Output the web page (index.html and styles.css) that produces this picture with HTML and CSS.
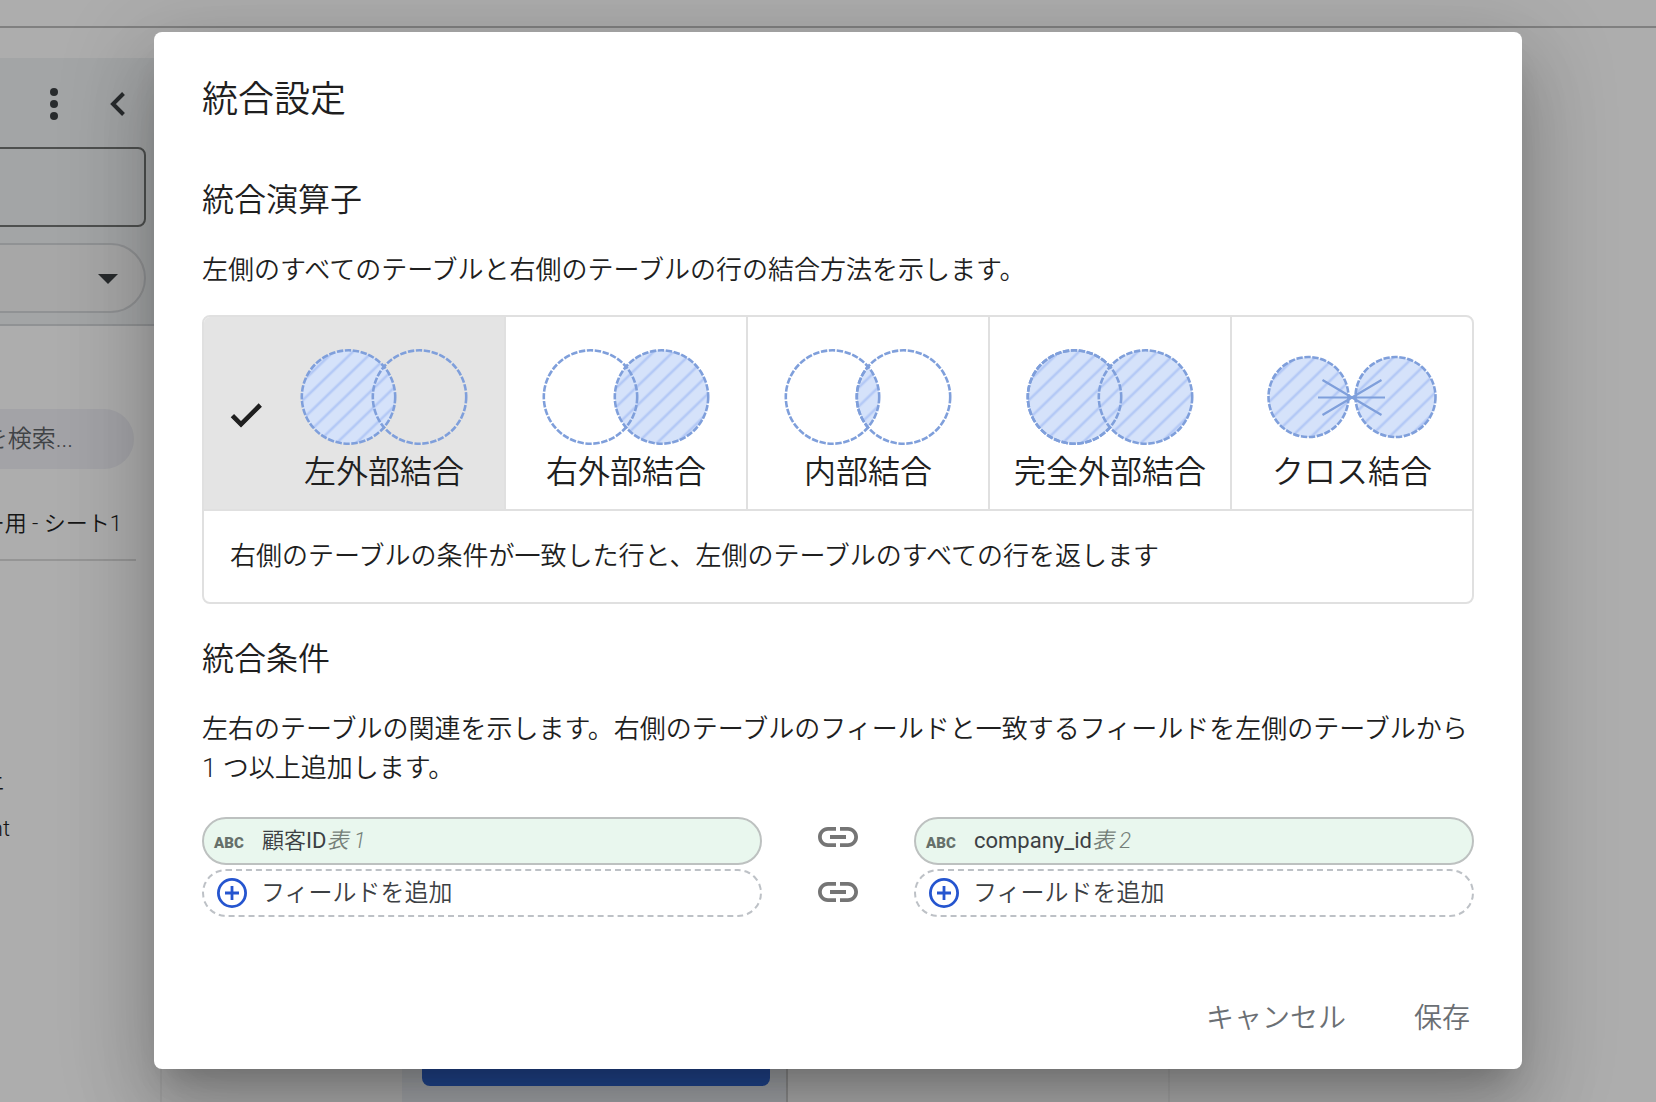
FILE: index.html
```html
<!DOCTYPE html>
<html lang="ja">
<head>
  <meta charset="utf-8">
  <title>統合設定</title>
  <link rel="stylesheet" href="styles.css">
</head>
<body>

<!-- shared drawings -->
<svg class="defs" aria-hidden="true">
  <defs>
    <pattern id="stripes" width="13.6" height="13.6" patternUnits="userSpaceOnUse" patternTransform="translate(0 8.5) rotate(-44)">
      <rect width="13.6" height="13.6" fill="#d5e2fa"/>
      <rect y="5.5" width="13.6" height="2.6" fill="#b4c9f6"/>
    </pattern>
    <clipPath id="leftCircle"><circle cx="50.5" cy="48" r="46.7"/></clipPath>
    <symbol id="link" viewBox="0 0 24 24">
      <path d="M3.9 12c0-1.71 1.39-3.1 3.1-3.1h4V7H7c-2.76 0-5 2.24-5 5s2.24 5 5 5h4v-1.9H7c-1.71 0-3.1-1.39-3.1-3.1zM8 13h8v-2H8v2zm9-6h-4v1.9h4c1.71 0 3.1 1.39 3.1 3.1s-1.39 3.1-3.1 3.1h-4V17h4c2.76 0 5-2.24 5-5s-2.24-5-5-5z"/>
    </symbol>
    <symbol id="add" viewBox="0 0 30 30">
      <circle cx="15" cy="15" r="13.6" fill="none" stroke="#2555cf" stroke-width="2.8"/>
      <path d="M15 8v14M8 15h14" stroke="#2555cf" stroke-width="2.8"/>
    </symbol>
  </defs>
</svg>

<div class="page">
  <div class="topbar"></div>
  <div class="workspace">
    <aside class="sidebar">
      <div class="sidebar-inner">
        <div class="source">
          <div class="source-actions">
            <button class="icon-button" aria-label="メニュー">
              <svg width="24" height="32" viewBox="0 0 24 32"><circle cx="12" cy="4" r="4"/><circle cx="12" cy="16" r="4"/><circle cx="12" cy="28" r="4"/></svg>
            </button>
            <button class="icon-button" aria-label="閉じる">
              <svg width="24" height="32" viewBox="0 0 24 32"><path d="M17.5 5.500L7 16l10.500 10.500" fill="none" stroke="#3c4043" stroke-width="4"/></svg>
            </button>
          </div>
          <input class="source-name" type="text" aria-label="名前">
          <button class="source-select" aria-label="選択">
            <svg width="20" height="10" viewBox="0 0 20 10"><path d="M0 0h20L10 10z"/></svg>
          </button>
        </div>
        <div class="fields">
          <input class="search" type="text" placeholder="フィールドを検索..." aria-label="検索">
          <div class="table-name">ユーザー用 - シート1</div>
          <ul class="field-list">
            <li class="field-jp">売上</li>
            <li>amount</li>
          </ul>
        </div>
      </div>
    </aside>
    <div class="canvas">
      <div class="canvas-gap"></div>
      <div class="canvas-table"><div class="join-button"></div></div>
      <div class="canvas-middle"></div>
      <div class="canvas-right"></div>
    </div>
  </div>
</div>

<div class="overlay">
  <div class="dialog" role="dialog" aria-labelledby="dialogTitle">
    <h1 id="dialogTitle">統合設定</h1>

    <h2>統合演算子</h2>
    <p>左側のすべてのテーブルと右側のテーブルの行の結合方法を示します。</p>

    <div class="operators">
      <div class="operator-row">
        <label class="operator selected">
          <input type="radio" name="operator" checked>
          <svg class="check" width="40" height="40" viewBox="0 0 24 24"><path d="M9 16.170L4.830 12l-1.420 1.410L9 19 21 7l-1.410-1.410z" fill="#1f1f1f" stroke="#1f1f1f" stroke-width=".8"/></svg>
          <span class="operator-body">
            <svg class="venn" width="172" height="96" viewBox="0 0 172 96">
              <circle class="filled" cx="50.5" cy="48" r="46.700"/>
              <circle cx="121.500" cy="48" r="46.700"/>
            </svg>
            <span>左外部結合</span>
          </span>
        </label>
        <label class="operator">
          <input type="radio" name="operator">
          <span class="operator-body">
            <svg class="venn" width="172" height="96" viewBox="0 0 172 96">
              <circle class="filled" cx="121.500" cy="48" r="46.700"/>
              <circle cx="50.5" cy="48" r="46.700"/>
            </svg>
            <span>右外部結合</span>
          </span>
        </label>
        <label class="operator">
          <input type="radio" name="operator">
          <span class="operator-body">
            <svg class="venn" width="172" height="96" viewBox="0 0 172 96">
              <g clip-path="url(#leftCircle)"><circle class="filled" cx="121.500" cy="48" r="46.700"/></g>
              <circle cx="50.5" cy="48" r="46.700"/>
              <circle cx="121.500" cy="48" r="46.700"/>
            </svg>
            <span>内部結合</span>
          </span>
        </label>
        <label class="operator">
          <input type="radio" name="operator">
          <span class="operator-body">
            <svg class="venn" width="172" height="96" viewBox="0 0 172 96">
              <circle class="filled" cx="50.5" cy="48" r="46.700"/>
              <circle class="filled" cx="121.500" cy="48" r="46.700"/>
              <circle cx="50.5" cy="48" r="46.700"/>
            </svg>
            <span>完全外部結合</span>
          </span>
        </label>
        <label class="operator">
          <input type="radio" name="operator">
          <span class="operator-body">
            <svg class="venn" width="172" height="96" viewBox="0 0 172 96">
              <circle class="filled" cx="42.500" cy="48" r="40"/>
              <circle class="filled" cx="129.500" cy="48" r="40"/>
              <path class="rays" d="M52 48.500h67M56.500 31l59 35M56.500 66L115.500 31"/>
            </svg>
            <span>クロス結合</span>
          </span>
        </label>
      </div>
      <div class="operator-help">右側のテーブルの条件が一致した行と、左側のテーブルのすべての行を返します</div>
    </div>

    <h2>統合条件</h2>
    <p>左右のテーブルの関連を示します。右側のテーブルのフィールドと一致するフィールドを左側のテーブルから 1 つ以上追加します。</p>

    <div class="conditions">
      <div class="chips">
        <button class="chip"><span class="type">ABC</span><span>顧客<span class="latin">ID</span></span><i>表 1</i></button>
        <button class="chip empty"><svg width="30" height="30"><use href="#add"/></svg>フィールドを追加</button>
      </div>
      <div class="links">
        <svg width="48" height="48"><use href="#link"/></svg>
        <svg width="48" height="48"><use href="#link"/></svg>
      </div>
      <div class="chips">
        <button class="chip"><span class="type">ABC</span><span class="latin">company_id</span><i>表 2</i></button>
        <button class="chip empty"><svg width="30" height="30"><use href="#add"/></svg>フィールドを追加</button>
      </div>
    </div>

    <div class="actions">
      <button>キャンセル</button>
      <button>保存</button>
    </div>
  </div>
</div>

</body>
</html>
```
FILE: styles.css
```css
* {
  box-sizing: border-box;
}

body {
  margin: 0;
  font-family: Roboto, "Noto Sans CJK JP", sans-serif;
  font-weight: 350;
  color: #1f1f1f;
}

button, input {
  font: inherit;
  color: inherit;
}

button {
  border: none;
  background: none;
  padding: 0;
}

.defs {
  position: absolute;
  width: 0;
  height: 0;
}

/* report editor behind the dialog */
.page {
  display: flex;
  flex-direction: column;
  height: 100vh;
  overflow: hidden;
}

.topbar {
  height: 28px;
  border-bottom: 2px solid #bdbdbd;
}

.workspace {
  display: flex;
  flex: 1;
  padding-top: 30px;
  min-height: 0;
}

/* the panel runs off the left edge of the window */
.sidebar {
  display: flex;
  justify-content: flex-end;
  width: 162px;
  overflow: hidden;
  border-right: 2px solid #f4f4f4;
}

.sidebar-inner {
  flex: none;
  width: 480px;
}

.source {
  padding: 26px 14px 11px;
  background: #f1f3f5;
  border-bottom: 2px solid #d5d7da;
}

.source-actions {
  display: flex;
  justify-content: flex-end;
  gap: 40px;
  padding-right: 16px;
  height: 63px;
}

.icon-button {
  height: 40px;
}

.source svg {
  display: block;
  fill: #3c4043;
}

.source-name {
  display: block;
  width: 100%;
  height: 80px;
  margin-bottom: 16px;
  border: 2px solid #747775;
  border-radius: 8px;
  background: transparent;
}

.source-select {
  display: flex;
  align-items: center;
  justify-content: flex-end;
  width: 100%;
  height: 70px;
  padding: 2px 26px 0;
  border: 2px solid #d5d7da;
  border-radius: 35px;
  background: #f6f6f6;
}

.fields {
  padding: 83px 24px 0;
  text-align: right;
}

.search {
  display: block;
  width: calc(100% - 2px);
  height: 60px;
  padding: 0 61px;
  border: none;
  border-radius: 30px;
  background: #f0f1f6;
  font-size: 24px;
  text-align: right;
}

.search::placeholder {
  color: #5f6368;
  opacity: 1;
}

.table-name {
  height: 92px;
  padding: 37px 14px 0;
  border-bottom: 2px solid #dcdcdc;
  font-size: 22px;
  line-height: 36px;
}

.field-list {
  margin: 0;
  padding: 196px 126px 0;
  list-style: none;
  font-size: 22px;
  line-height: 48px;
}

.field-list .field-jp {
  padding-right: 6px;
}

.canvas {
  display: flex;
  flex: 1;
}

.canvas-gap {
  width: 240px;
}

.canvas-table {
  display: flex;
  align-items: flex-end;
  width: 386px;
  padding: 16px 16px 16px 20px;
  border-right: 2px solid #d0d0d0;
  background: #f0f4f9;
}

.join-button {
  flex: 1;
  height: 72px;
  border-radius: 8px;
  background: #3267d6;
}

.canvas-middle {
  width: 380px;
}

.canvas-right {
  flex: 1;
  border-left: 2px solid #f4f4f4;
}

/* dialog */
.overlay {
  position: absolute;
  inset: 0;
  display: flex;
  align-items: flex-start;
  padding: 32px 134px 32px 154px;
  background: rgba(0, 0, 0, .32);
}

.dialog {
  flex: 1;
  padding: 44px 48px 22px;
  border-radius: 8px;
  background: #fff;
  box-shadow: 0 22px 30px -14px rgba(0, 0, 0, .2), 0 48px 76px 6px rgba(0, 0, 0, .14), 0 18px 92px 16px rgba(0, 0, 0, .12);
}

h1, h2 {
  margin: 0;
  font-weight: 350;
  line-height: 48px;
}

h1 {
  margin-bottom: 52px;
  font-size: 36px;
}

h2 {
  margin-bottom: 27px;
  font-size: 32px;
}

p {
  margin: 0 0 25px;
  font-size: 26px;
  line-height: 39px;
}

.operators {
  margin-bottom: 31px;
  border: 2px solid #e0e0e0;
  border-radius: 8px;
  overflow: hidden;
}

.operator-row {
  display: flex;
  border-bottom: 2px solid #e0e0e0;
}

.operator {
  display: flex;
  align-items: center;
  flex: 1 1 182px;
  height: 192px;
  border-left: 2px solid #e0e0e0;
  font-size: 32px;
  line-height: 54px;
}

.operator input {
  position: absolute;
  opacity: 0;
}

.operator.selected {
  flex-basis: 240px;
  padding-left: 22px;
  border-left: none;
  background: #e4e4e4;
}

.check {
  flex: none;
  margin: 4px -2px 0 0;
}

.operator-body {
  display: flex;
  flex: 1;
  flex-direction: column;
  align-items: center;
  padding-top: 22px;
}

.venn circle {
  fill: none;
  stroke: #7f9fdb;
  stroke-width: 2.6;
  stroke-dasharray: 6.4 1.6;
}

.venn .filled {
  fill: url(#stripes);
}

.venn .rays {
  fill: none;
  stroke: #7f9fdb;
  stroke-width: 2.2;
}

.operator-help {
  padding: 26px;
  font-size: 26px;
  line-height: 39px;
}

.conditions {
  display: flex;
}

.chips {
  display: flex;
  flex: 1;
  flex-direction: column;
  gap: 4px;
  padding-top: 4px;
}

.links {
  display: flex;
  flex-direction: column;
  align-items: center;
  gap: 7px;
  width: 152px;
  fill: #757575;
}

.chip {
  display: flex;
  align-items: center;
  height: 48px;
  padding: 0 10px;
  border: 2px solid #bdc1c0;
  border-radius: 24px;
  background: #e9f7ee;
  font-size: 22px;
  line-height: 40px;
  color: #3c4043;
}

.chip .type {
  width: 48px;
  padding-top: 4px;
  text-align: left;
  font-size: 15px;
  font-weight: 900;
  color: #66706a;
}

.chip .latin {
  font-weight: 400;
}

.chip i {
  color: #757f79;
}

.chip.empty {
  gap: 14px;
  padding: 0 13px;
  border: 2px dashed #bdc1c6;
  background: #fff;
  font-size: 24px;
}

.actions {
  display: flex;
  justify-content: flex-end;
  gap: 60px;
  margin-top: 74px;
}

.actions button {
  height: 56px;
  padding: 0 4px;
  font-size: 28px;
  line-height: 56px;
  color: #6b6f74;
}
```
